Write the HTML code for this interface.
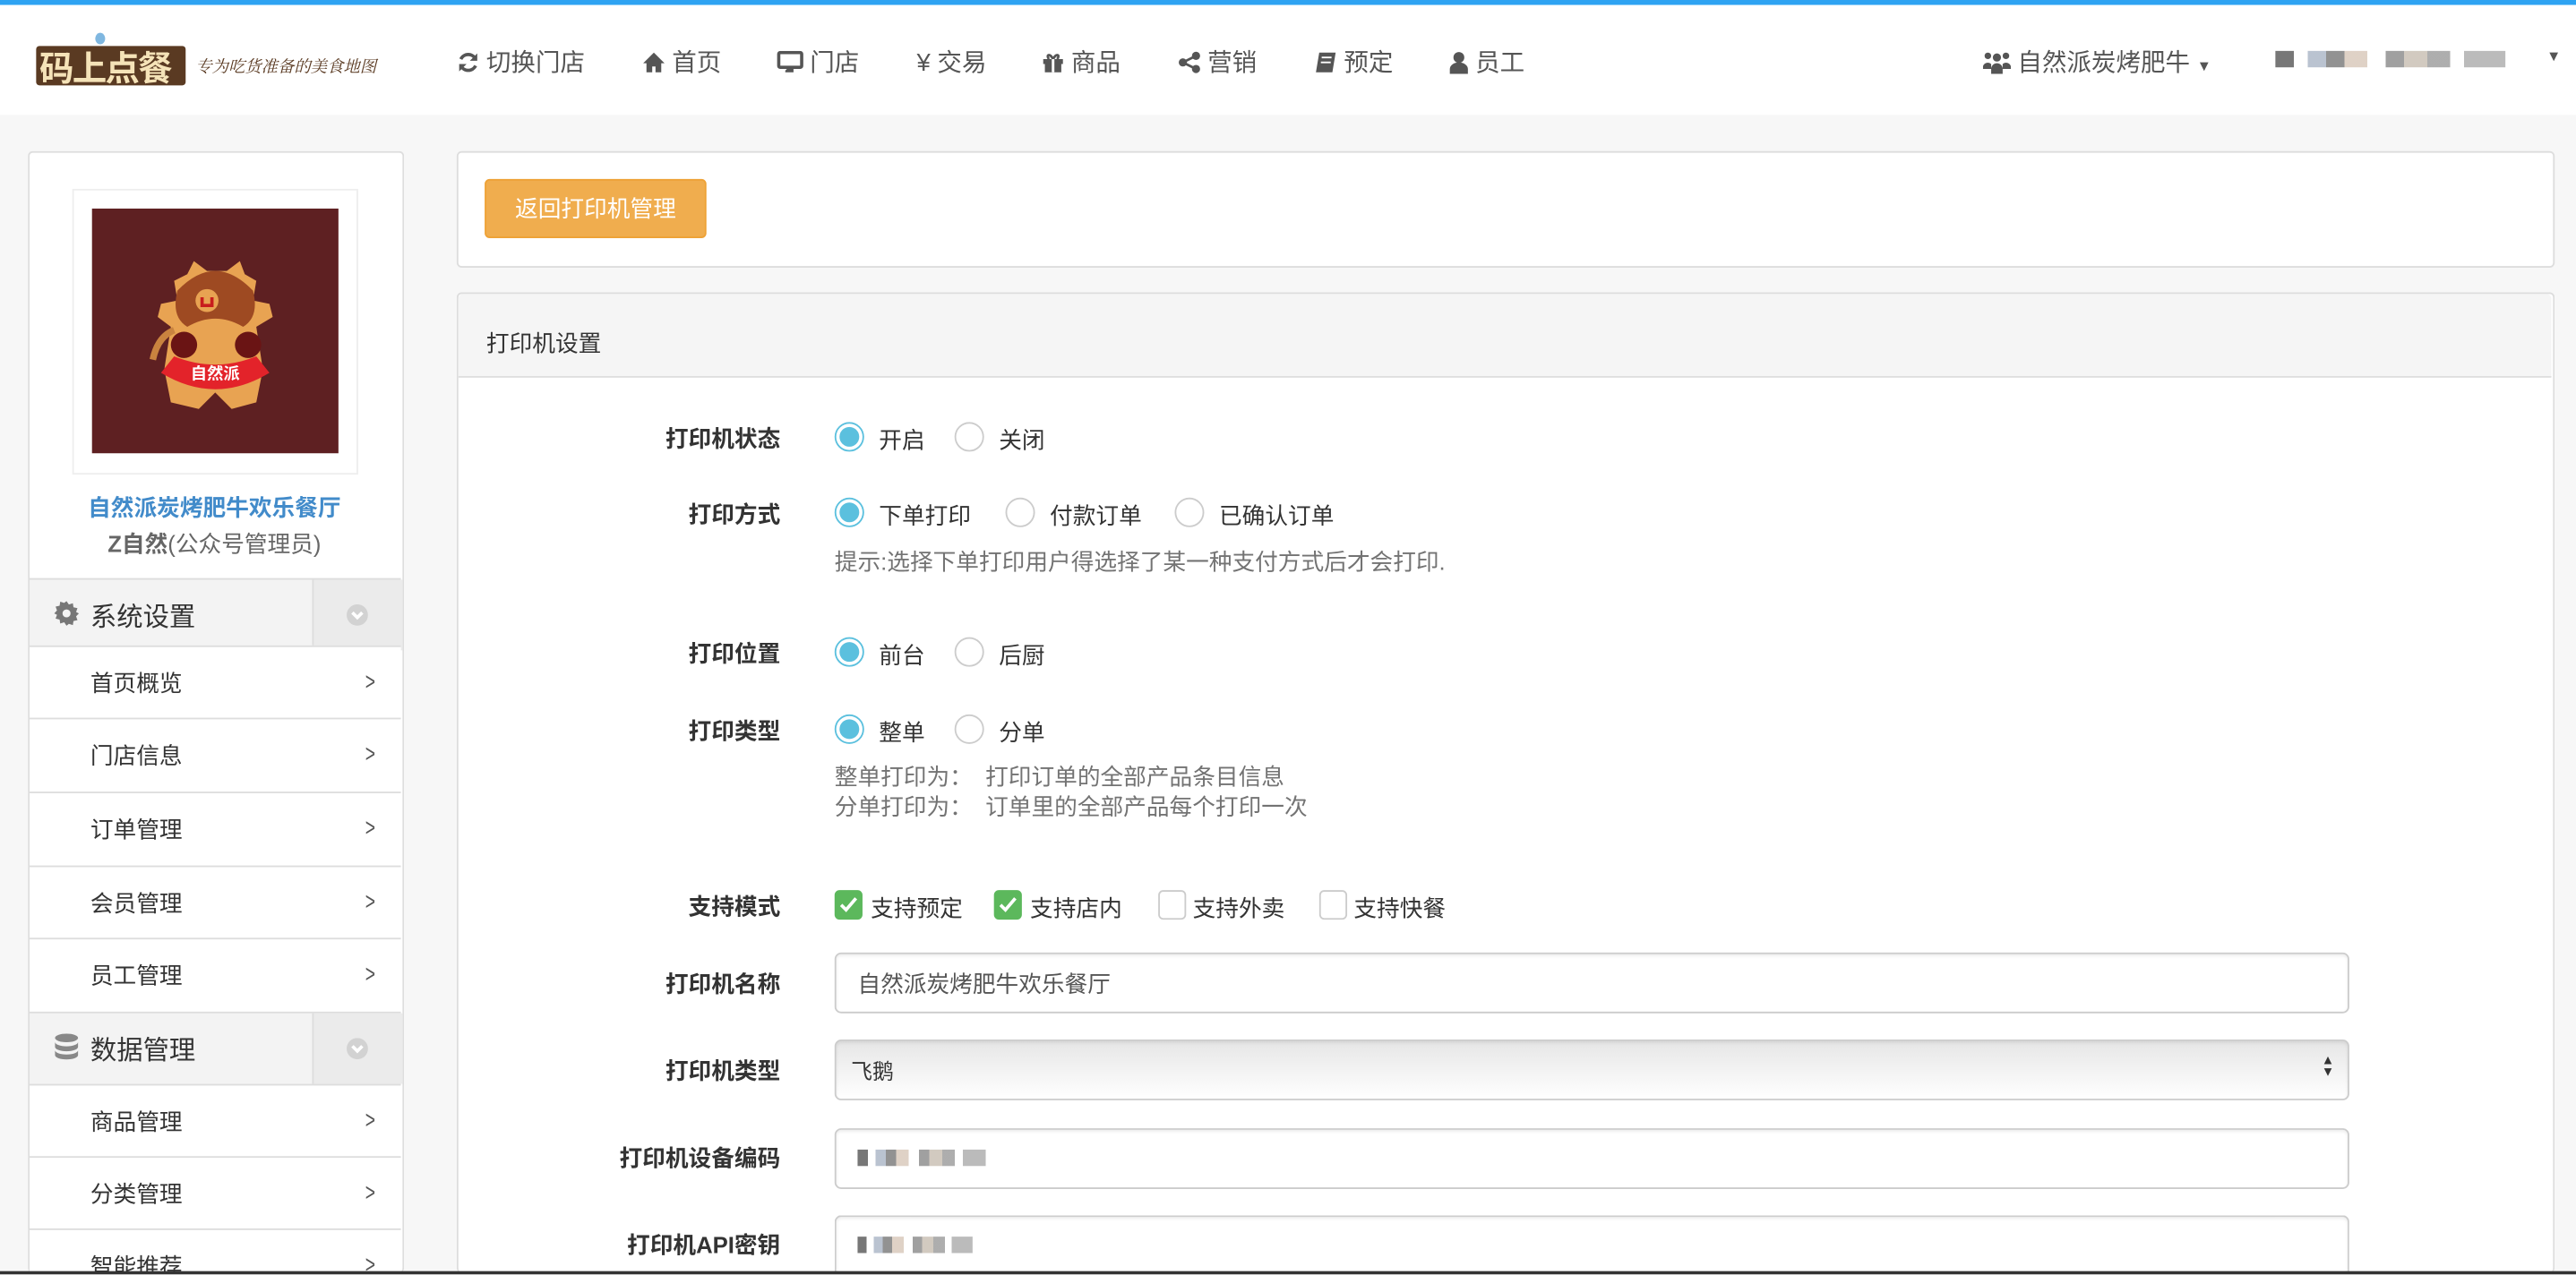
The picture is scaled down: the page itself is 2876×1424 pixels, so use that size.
<!DOCTYPE html>
<html><head><meta charset="utf-8">
<style>
html,body{margin:0;padding:0;width:2876px;height:1424px;overflow:hidden;background:#f7f7f7}
#clip{position:absolute;left:0;top:0;width:2876px;height:1424px;overflow:hidden}
#w{position:absolute;left:0;top:0;width:1568px;height:776px;overflow:hidden;transform:scale(1.8342);transform-origin:0 0;font-family:"Liberation Sans","Noto Sans CJK SC",sans-serif;font-size:14px;color:#333;background:#f7f7f7}
.a{position:absolute;white-space:nowrap}
.nav{font-size:15px;color:#555;top:27px}
.nav svg{vertical-align:-2px;margin-right:4px}
.panel{position:absolute;background:#fff;border:1px solid #ddd;border-radius:3px}
.item{position:absolute;left:18px;width:226px;height:44px;border-top:1px solid #ddd;background:#fff;font-size:14px;color:#333}
.item span{position:absolute;left:37px;top:12px}
.item i{position:absolute;left:203px;top:13px;font-style:normal;color:#555;font-size:15px;transform:scaleX(.7)}
.hd{position:absolute;left:18px;width:226px;height:43px;border-top:1px solid #ddd;background:#f3f3f3}
.hd .r{position:absolute;left:172px;top:0;width:54px;height:43px;background:#ebebeb;border-left:1px solid #ddd}
.hd .t{position:absolute;left:37px;top:9px;font-size:16px}
.lab{position:absolute;right:1093px;font-weight:bold;color:#333;font-size:14px}
.rad{position:absolute;width:16px;height:16px;border-radius:50%;border:1px solid #ccc;background:#fff}
.rad.on{border:1px solid #5bc0de;background:#fff}
.rad.on:after{content:"";position:absolute;left:2px;top:2px;width:12px;height:12px;border-radius:50%;background:#5bc0de}
.cb{position:absolute;width:15px;height:16px;border-radius:3px;border:1px solid #ccc;background:#fff}
.cb.on{background:#5cb85c;border-color:#5cb85c}
.inp{position:absolute;left:508px;width:920px;height:35px;border:1px solid #ccc;border-radius:4px;background:#fff;box-shadow:inset 0 1px 2px rgba(0,0,0,.08)}
.hint{position:absolute;color:#737373;font-size:14px}
.blur{position:absolute;height:10px;background:linear-gradient(90deg,#555 0 8%,#fff 8% 14%,#a9b4c5 14% 22%,#777 22% 30%,#d7c6b8 30% 40%,#fff 40% 48%,#888 48% 56%,#c7bdb0 56% 66%,#999 66% 76%,#fff 76% 82%,#aaa 82% 100%);opacity:.8}
</style></head><body>
<div id="clip">
<div id="w">
<div class="a" style="left:0;top:0;width:1568px;height:3px;background:#2ea3f2"></div>
<div class="a" style="left:0;top:3px;width:1568px;height:67px;background:#fff"></div>
<div class="a" style="left:22px;top:28px;width:91px;height:24px;background:#5a3a22;border-radius:2px"></div>
<div class="a" style="left:24px;top:26px;font-size:21px;font-weight:bold;color:#f5e3b8;letter-spacing:-1px">码上点餐</div>
<div class="a" style="left:58px;top:20px;width:6px;height:7px;border-radius:50%;background:#7fb7e0"></div>
<div class="a" style="left:119px;top:32px;font-size:10px;color:#5a3a22;font-family:'Liberation Serif','Noto Serif CJK SC',serif;font-style:italic">专为吃货准备的美食地图</div>
<div class="a nav" style="left:278px"><svg width="14" height="14" viewBox="0 0 14 14"><path d="M11.5 5A5 5 0 0 0 2.5 5M2.5 9A5 5 0 0 0 11.5 9" stroke="#555" stroke-width="2" fill="none"/><path d="M12.5 1.5V6H8zM1.5 12.5V8H6z" fill="#555"/></svg>切换门店</div>
<div class="a nav" style="left:391px"><svg width="14" height="14" viewBox="0 0 14 14"><path d="M7 1L0.5 7.5h2V13h3.5V9.5h2V13h3.5V7.5h2z" fill="#555"/></svg>首页</div>
<div class="a nav" style="left:473px"><svg width="16" height="14" viewBox="0 0 16 14"><rect x="1" y="1" width="14" height="9" rx="1" fill="none" stroke="#555" stroke-width="2"/><path d="M6 11h4v2H5v-1z" fill="#555"/></svg>门店</div>
<div class="a nav" style="left:558px">¥ 交易</div>
<div class="a nav" style="left:634px"><svg width="14" height="14" viewBox="0 0 14 14"><path d="M1 5h12v3H1zM2 8h10v5H2z" fill="#555"/><path d="M7 5C5 1 2.5 2.5 4.5 5M7 5C9 1 11.5 2.5 9.5 5" stroke="#555" stroke-width="1.5" fill="none"/><rect x="6.2" y="5" width="1.6" height="8" fill="#fff"/></svg>商品</div>
<div class="a nav" style="left:717px"><svg width="14" height="14" viewBox="0 0 14 14"><circle cx="11" cy="3" r="2.5" fill="#555"/><circle cx="3" cy="7" r="2.5" fill="#555"/><circle cx="11" cy="11" r="2.5" fill="#555"/><path d="M11 3L3 7l8 4" stroke="#555" stroke-width="1.5" fill="none"/></svg>营销</div>
<div class="a nav" style="left:800px"><svg width="14" height="14" viewBox="0 0 14 14"><path d="M3 1h10l-2 12H1z" fill="#555"/><path d="M4.5 4h6M4 7h6" stroke="#fff" stroke-width="1"/></svg>预定</div>
<div class="a nav" style="left:882px"><svg width="12" height="14" viewBox="0 0 12 14"><circle cx="6" cy="4" r="3.3" fill="#555"/><path d="M0.5 14v-3a5.5 4 0 0 1 11 0v3z" fill="#555"/></svg>员工</div>
<div class="a nav" style="left:1207px"><svg width="17" height="14" viewBox="0 0 17 14"><circle cx="8.5" cy="4" r="2.5" fill="#555"/><circle cx="3" cy="3" r="2" fill="#555"/><circle cx="14" cy="3" r="2" fill="#555"/><path d="M5 14v-3a3.5 3.5 0 0 1 7 0v3zM0 9.5a3 3 0 0 1 5-1.5v3H0zM17 9.5a3 3 0 0 0-5-1.5v3h5z" fill="#555"/></svg>自然派炭烤肥牛 <span style="font-size:9px">▼</span></div>
<div class="blur" style="left:1385px;top:31px;width:140px"></div>
<div class="a nav" style="left:1550px;top:29px;font-size:9px">▼</div>

<div class="panel" style="left:17px;top:92px;width:227px;height:682px;border-bottom:none"></div>
<div class="a" style="left:44px;top:115px;width:172px;height:172px;border:1px solid #eee;background:#fff"></div>
<div class="a" style="left:56px;top:127px;width:150px;height:149px;background:#5e2022"></div>
<svg class="a" style="left:56px;top:127px" width="150" height="149" viewBox="0 0 150 149">
<path d="M58 40 L62 32 L70 38 L82 38 L90 32 L93 40 L100 44 L98 56 L108 58 L110 66 L100 72 L104 98 L100 118 L85 122 L75 112 L65 122 L48 118 L44 98 L48 72 L40 66 L42 58 L52 56 L50 44 Z" fill="#e8a352"/>
<path d="M52 50 Q75 26 98 50 Q102 66 92 72 Q75 62 58 72 Q48 66 52 50z" fill="#9e4a22"/>
<path d="M37 92 Q40 78 50 74" stroke="#c9833f" stroke-width="4" fill="none"/>
<path d="M42 100 Q75 120 108 100 L100 90 Q75 100 50 90z" fill="#e3232a"/>
<circle cx="56" cy="83" r="8" fill="#6a1414"/><circle cx="95" cy="83" r="8" fill="#6a1414"/>
<circle cx="70" cy="56" r="7" fill="#e8a352"/><path d="M67 54v5h6v-5" stroke="#c81d1d" stroke-width="2" fill="none"/>
<text x="75" y="104" font-size="10" font-weight="bold" fill="#fff" text-anchor="middle" font-family="Noto Sans CJK SC,sans-serif">自然派</text>
</svg>
<div class="a" style="left:17px;width:227px;text-align:center;top:299px;font-weight:bold;color:#428bca;font-size:14px">自然派炭烤肥牛欢乐餐厅</div>
<div class="a" style="left:17px;width:227px;text-align:center;top:321px;color:#666;font-size:14px"><b>Z自然</b>(公众号管理员)</div>

<div class="hd" style="top:352px"><svg class="a" style="left:15px;top:13px" width="15" height="15" viewBox="0 0 16 16"><path d="M8 0l1.5 2.2 2.6-.8.4 2.6 2.6.6-.9 2.5L16 8l-1.8 1.9.9 2.5-2.6.6-.4 2.6-2.6-.8L8 16l-1.5-2.2-2.6.8-.4-2.6-2.6-.6.9-2.5L0 8l1.8-1.9-.9-2.5 2.6-.6.4-2.6 2.6.8z" fill="#777"/><circle cx="8" cy="8" r="2.6" fill="#f3f3f3"/></svg><span class="t">系统设置</span><div class="r"><svg class="a" style="left:20px;top:15px" width="13" height="13" viewBox="0 0 13 13"><circle cx="6.5" cy="6.5" r="6.5" fill="#d2d2d2"/><path d="M3.5 5l3 3 3-3" stroke="#fff" stroke-width="2" fill="none"/></svg></div></div>
<div class="item" style="top:393px"><span>首页概览</span><i>&gt;</i></div>
<div class="item" style="top:437px"><span>门店信息</span><i>&gt;</i></div>
<div class="item" style="top:482px"><span>订单管理</span><i>&gt;</i></div>
<div class="item" style="top:527px"><span>会员管理</span><i>&gt;</i></div>
<div class="item" style="top:571px"><span>员工管理</span><i>&gt;</i></div>
<div class="hd" style="top:616px"><svg class="a" style="left:15px;top:12px" width="15" height="17" viewBox="0 0 15 17"><ellipse cx="7.5" cy="3" rx="7" ry="2.6" fill="#888"/><path d="M.5 5.5a7 2.6 0 0 0 14 0v3a7 2.6 0 0 1-14 0zM.5 10.5a7 2.6 0 0 0 14 0v3a7 2.6 0 0 1-14 0z" fill="#888"/></svg><span class="t">数据管理</span><div class="r"><svg class="a" style="left:20px;top:15px" width="13" height="13" viewBox="0 0 13 13"><circle cx="6.5" cy="6.5" r="6.5" fill="#d2d2d2"/><path d="M3.5 5l3 3 3-3" stroke="#fff" stroke-width="2" fill="none"/></svg></div></div>
<div class="item" style="top:660px"><span>商品管理</span><i>&gt;</i></div>
<div class="item" style="top:704px"><span>分类管理</span><i>&gt;</i></div>
<div class="item" style="top:748px;height:26px;overflow:hidden"><span>智能推荐</span><i>&gt;</i></div>

<div class="panel" style="left:278px;top:92px;width:1275px;height:69px"></div>
<div class="a" style="left:295px;top:109px;width:135px;height:36px;background:#f0ad4e;border:1px solid #eea236;border-radius:3px;box-sizing:border-box;color:#fff;font-size:14px;text-align:center;line-height:34px">返回打印机管理</div>

<div class="panel" style="left:278px;top:178px;width:1275px;height:596px;border-bottom:none"></div>
<div class="a" style="left:279px;top:179px;width:1274px;height:50px;background:#f5f5f5;border-bottom:1px solid #ddd;border-radius:3px 3px 0 0"></div>
<div class="a" style="left:296px;top:199px">打印机设置</div>

<div class="lab" style="top:257px">打印机状态</div>
<div class="rad on" style="left:508px;top:257px"></div><div class="a" style="left:535px;top:258px">开启</div>
<div class="rad" style="left:581px;top:257px"></div><div class="a" style="left:608px;top:258px">关闭</div>

<div class="lab" style="top:303px">打印方式</div>
<div class="rad on" style="left:508px;top:303px"></div><div class="a" style="left:535px;top:304px">下单打印</div>
<div class="rad" style="left:612px;top:303px"></div><div class="a" style="left:639px;top:304px">付款订单</div>
<div class="rad" style="left:715px;top:303px"></div><div class="a" style="left:742px;top:304px">已确认订单</div>
<div class="hint a" style="left:508px;top:332px">提示:选择下单打印用户得选择了某一种支付方式后才会打印.</div>

<div class="lab" style="top:388px">打印位置</div>
<div class="rad on" style="left:508px;top:388px"></div><div class="a" style="left:535px;top:389px">前台</div>
<div class="rad" style="left:581px;top:388px"></div><div class="a" style="left:608px;top:389px">后厨</div>

<div class="lab" style="top:435px">打印类型</div>
<div class="rad on" style="left:508px;top:435px"></div><div class="a" style="left:535px;top:436px">整单</div>
<div class="rad" style="left:581px;top:435px"></div><div class="a" style="left:608px;top:436px">分单</div>
<div class="hint a" style="left:508px;top:463px">整单打印为：&nbsp; 打印订单的全部产品条目信息</div>
<div class="hint a" style="left:508px;top:481px">分单打印为：&nbsp; 订单里的全部产品每个打印一次</div>

<div class="lab" style="top:542px">支持模式</div>
<div class="cb on" style="left:508px;top:542px"><svg width="15" height="16"><path d="M3 8l3 3 6-7" stroke="#fff" stroke-width="2" fill="none"/></svg></div><div class="a" style="left:530px;top:543px">支持预定</div>
<div class="cb on" style="left:605px;top:542px"><svg width="15" height="16"><path d="M3 8l3 3 6-7" stroke="#fff" stroke-width="2" fill="none"/></svg></div><div class="a" style="left:627px;top:543px">支持店内</div>
<div class="cb" style="left:705px;top:542px"></div><div class="a" style="left:726px;top:543px">支持外卖</div>
<div class="cb" style="left:803px;top:542px"></div><div class="a" style="left:824px;top:543px">支持快餐</div>

<div class="lab" style="top:589px">打印机名称</div>
<div class="inp" style="top:580px"></div><div class="a" style="left:522px;top:589px;color:#555">自然派炭烤肥牛欢乐餐厅</div>

<div class="lab" style="top:642px">打印机类型</div>
<div class="inp" style="top:633px;background:linear-gradient(#e6e6e6,#fff)"></div><div class="a" style="left:518px;top:642px;color:#333;font-size:13px">飞鹅</div>
<div class="a" style="left:1413px;top:642px;font-size:8px;line-height:7px;color:#333">▲<br>▼</div>

<div class="lab" style="top:695px">打印机设备编码</div>
<div class="inp" style="top:687px"></div><div class="blur" style="left:522px;top:700px;width:78px"></div>

<div class="lab" style="top:748px">打印机API密钥</div>
<div class="inp" style="top:740px;height:34px;border-bottom:none;border-radius:4px 4px 0 0"></div><div class="blur" style="left:522px;top:753px;width:70px"></div>

<div class="a" style="left:0;top:774px;width:1568px;height:2px;background:#333"></div>
</div>
</div>
</body></html>
